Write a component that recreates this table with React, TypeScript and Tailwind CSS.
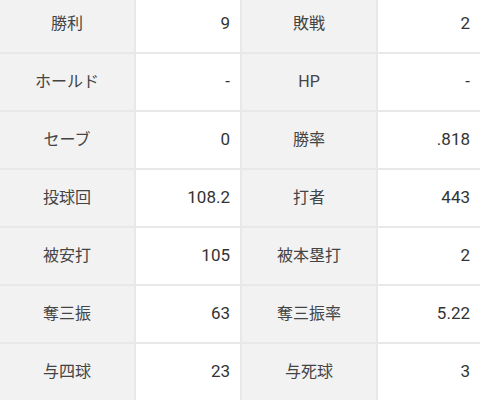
import React from "react";

const rows: [string, string, string, string][] = [
  ["勝利", "9", "敗戦", "2"],
  ["ホールド", "-", "HP", "-"],
  ["セーブ", "0", "勝率", ".818"],
  ["投球回", "108.2", "打者", "443"],
  ["被安打", "105", "被本塁打", "2"],
  ["奪三振", "63", "奪三振率", "5.22"],
  ["与四球", "23", "与死球", "3"],
];

const font = { fontFamily: 'Roboto, "Noto Sans CJK JP", sans-serif' };

export default function App() {
  return (
    <div className="w-[480px] h-[400px] overflow-hidden bg-white" style={font}>
      <div className="-mt-[4px] grid grid-cols-[134px_104px_134px_102px] auto-rows-[56px] gap-[2px] bg-[#e8e8e8]">
        {rows.map((r, i) => (
          <React.Fragment key={i}>
            <div className="bg-[#f2f2f2] flex items-center justify-center text-[16px] text-[#444]">{r[0]}</div>
            <div className="bg-white flex items-center justify-end pr-[10px] text-[17px] text-[#333]">{r[1]}</div>
            <div className="bg-[#f2f2f2] flex items-center justify-center text-[16px] text-[#444]">{r[2]}</div>
            <div className="bg-white flex items-center justify-end pr-[10px] text-[17px] text-[#333]">{r[3]}</div>
          </React.Fragment>
        ))}
      </div>
    </div>
  );
}
